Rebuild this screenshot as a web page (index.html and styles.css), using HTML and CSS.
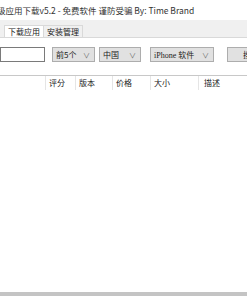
FILE: index.html
```html
<!DOCTYPE html>
<html>
<head>
<meta charset="utf-8">
<link rel="stylesheet" href="styles.css">
</head>
<body>
<div class="window">
  <div class="titlebar"><span class="title">级应用下载v5.2 - 免费软件 谨防受骗 By: Time Brand</span></div>
  <div class="tabs">
    <div class="tab active">下载应用</div>
    <div class="tab">安装管理</div>
  </div>
  <div class="page">
    <div class="toolbar">
      <div class="input"></div>
      <div class="combo c1"><span>前5个</span><span class="arrow">∨</span></div>
      <div class="combo c2"><span>中国</span><span class="arrow">∨</span></div>
      <div class="combo c3"><span class="serif">iPhone 软件</span><span class="arrow">∨</span></div>
      <div class="button"><span>搜</span></div>
    </div>
    <div class="list">
      <div class="header">
        <div class="col w1"></div>
        <div class="col w2">评分</div>
        <div class="col w3">版本</div>
        <div class="col w4">价格</div>
        <div class="col w5">大小</div>
        <div class="col w6">描述</div>
      </div>
    </div>
  </div>
  <div class="bottom"></div>
</div>
</body>
</html>
```
FILE: styles.css
```css
html, body { margin: 0; padding: 0; }
body { width: 247px; height: 296px; overflow: hidden; background: #f0f0f0; font-family: "Noto Sans CJK SC", "Noto Sans", sans-serif; font-size: 8px; color: #222; }
.window { display: flex; flex-direction: column; height: 296px; }
.titlebar { height: 20px; background: #fff; display: flex; align-items: center; overflow: hidden; white-space: nowrap; }
.title { margin-left: -3px; font-size: 8.5px; color: #333; }
.tabs { display: flex; padding: 5px 0 0 4px; height: 12px; background: #f0f0f0; }
.tab { padding: 0 3px; border: 1px solid #d9d9d9; border-bottom: none; line-height: 11px; background: #f0f0f0; margin-right: -1px; color: #222; }
.tab.active { background: #fff; }
.page { flex: 1; background: #fff; display: flex; flex-direction: column; border-top: 1px solid #d9d9d9; }
.toolbar { display: flex; align-items: center; padding-top: 9px; height: 15px; }
.input { width: 43px; height: 13px; border: 1px solid #7a7a7a; background: #fff; margin-right: 7px; }
.combo { height: 13px; border: 1px solid #adadad; background: #e1e1e1; display: flex; align-items: center; justify-content: space-between; padding: 0 4px 0 3px; box-sizing: border-box; height: 15px; }
.c1 { width: 43px; margin-right: 4px; }
.c2 { width: 42px; margin-right: 9px; }
.c3 { width: 64px; margin-right: 13px; }
.serif { font-family: "Liberation Serif", "Noto Sans CJK SC", serif; }
.arrow { font-size: 7px; color: #666; }
.button { flex: 1; height: 15px; border: 1px solid #adadad; border-right: none; background: #e1e1e1; box-sizing: border-box; display: flex; justify-content: flex-end; align-items: center; overflow: hidden; }
.button span { margin-right: -4px; }
.list { margin-top: 13px; flex: 1; border-top: 1px solid #c8c8c8; background: #fff; }
.header { display: flex; height: 14px; }
.col { border-right: 1px solid #e5e5e5; padding-left: 3px; line-height: 14px; box-sizing: border-box; }
.w1 { width: 46px; }
.w2 { width: 30px; }
.w3 { width: 37px; }
.w4 { width: 38px; }
.w5 { width: 48px; }
.w6 { flex: 1; border-right: none; padding-left: 5px; }
.bottom { height: 4px; background: #c4c4c4; }
```
